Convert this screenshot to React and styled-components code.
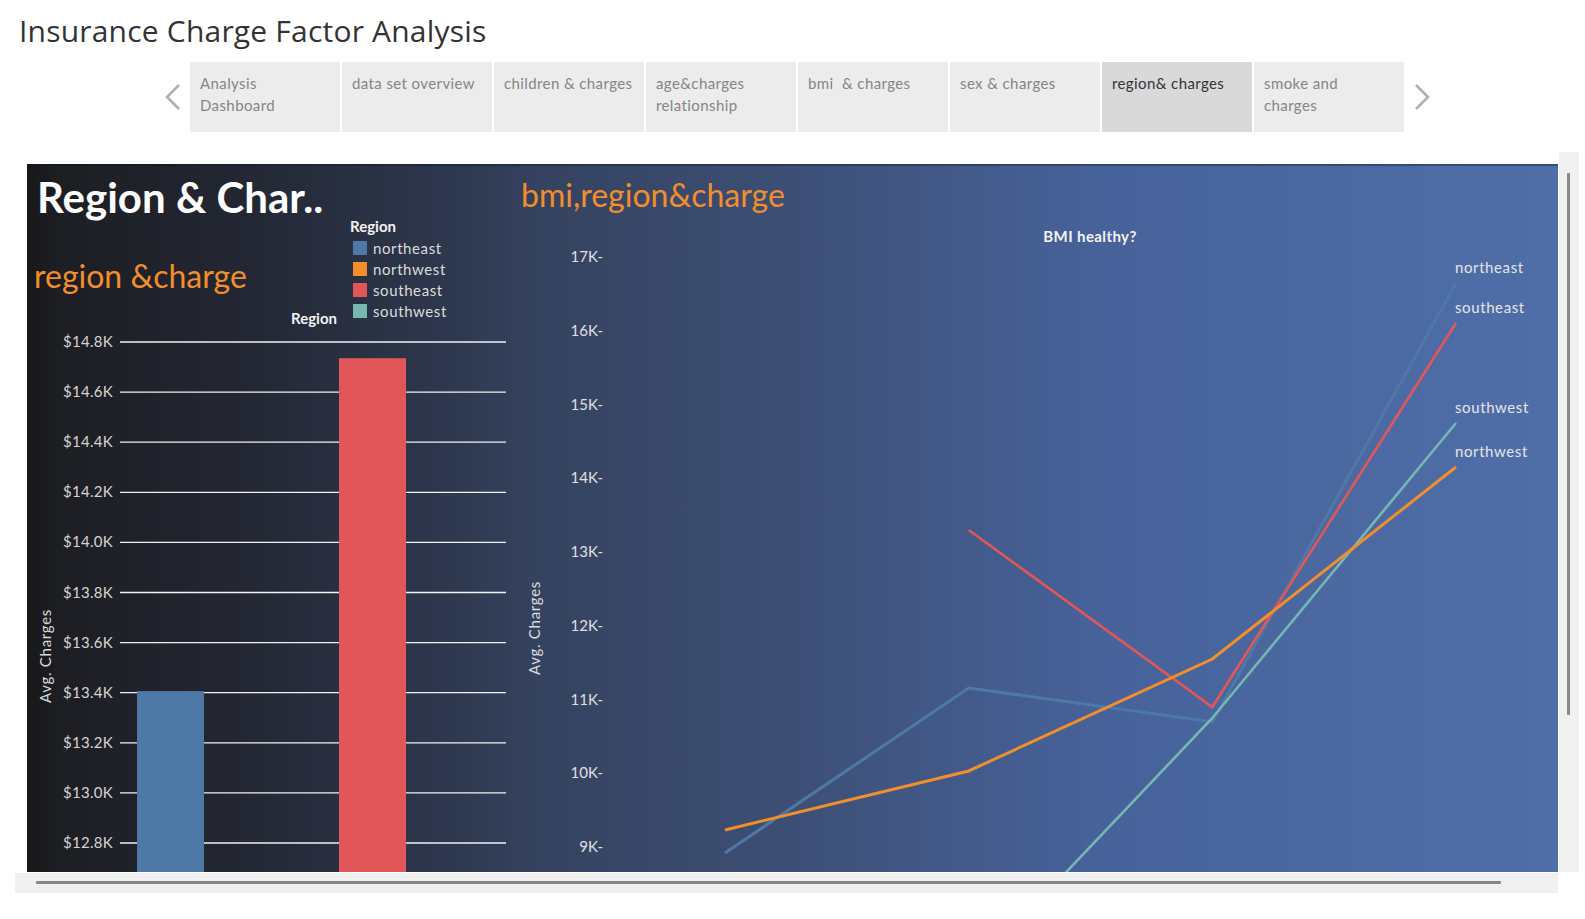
import React from "react";
import styled, { createGlobalStyle } from "styled-components";

const GlobalStyle = createGlobalStyle`
  body {
    margin: 0;
    background: #ffffff;
    font-family: Lato, "Open Sans", sans-serif;
  }
`;

const tabs = [
  "Analysis\nDashboard",
  "data set overview",
  "children & charges",
  "age&charges\nrelationship",
  "bmi  & charges",
  "sex & charges",
  "region& charges",
  "smoke and\ncharges",
];

const regions = [
  { name: "northeast", color: "#4e79a7", avg: 13406.38, bmi: [8919, 11156, 10695, 16648] },
  { name: "northwest", color: "#f28e2b", avg: 12417.58, bmi: [9231, 10031, 11549, 14153] },
  { name: "southeast", color: "#e15759", avg: 14735.41, bmi: [null, 13298, 10898, 16105] },
  { name: "southwest", color: "#76b7b2", avg: 12346.94, bmi: [5500, 7264, 10749, 14749] },
];

// bar chart scale
const barY = (v) => 12 + ((14800 - v) / 200) * 50.1;
const barTicks = [14800, 14600, 14400, 14200, 14000, 13800, 13600, 13400, 13200, 13000, 12800];

// line chart scale
const lineY = (v) => 37 + (17000 - v) * (590 / 8000);
const lineX = (i) => 215 + i * 243.67;
const lineTicks = [17, 16, 15, 14, 13, 12, 11, 10, 9];
const drawOrder = ["northeast", "southeast", "southwest", "northwest"];

const Chevron = ({ dir }) => (
  <svg width="16" height="26" viewBox="0 0 16 26">
    <path
      d={dir === "left" ? "M14 1 L2 13 L14 25" : "M2 1 L14 13 L2 25"}
      fill="none"
      stroke="#b0b0b0"
      strokeWidth="2.6"
    />
  </svg>
);

const BarChart = () => (
  <BarSvg width="483" height="542">
    {barTicks.map((t) => (
      <g key={t}>
        <line x1="93" x2="479" y1={barY(t)} y2={barY(t)} stroke="#f2f2f2" strokeWidth="1.3" />
        <text x="86" y={barY(t) + 5} textAnchor="end" fill="#d4d4d4" fontSize="15" letterSpacing="0.3">
          ${(t / 1000).toFixed(1)}K
        </text>
      </g>
    ))}
    {regions.map((r, i) => (
      <rect
        key={r.name}
        x={110 + i * 101}
        y={barY(r.avg)}
        width="67"
        height={Math.max(0, 542 - barY(r.avg))}
        fill={r.color}
      />
    ))}
    <text
      transform="translate(24 326) rotate(-90)"
      textAnchor="middle"
      fill="#d9d9d9"
      fontSize="15"
      letterSpacing="0.7"
    >
      Avg. Charges
    </text>
  </BarSvg>
);

const LineChart = () => (
  <LineSvg width="1048" height="652">
    {lineTicks.map((k) => (
      <text key={k} x="93" y={lineY(k * 1000) + 5} textAnchor="end" fill="#e0e0e0" fontSize="15">
        {k}K-
      </text>
    ))}
    <text
      transform="translate(30 408) rotate(-90)"
      textAnchor="middle"
      fill="#dcdcdc"
      fontSize="15"
      letterSpacing="0.7"
    >
      Avg. Charges
    </text>
    <text
      x="580"
      y="22"
      textAnchor="middle"
      fill="#f4f4f4"
      fontSize="15"
      fontWeight="700"
      letterSpacing="0.4"
    >
      BMI healthy?
    </text>
    {drawOrder.map((name) => {
      const r = regions.find((x) => x.name === name);
      const pts = r.bmi
        .map((v, i) => (v == null ? null : `${lineX(i)},${lineY(v)}`))
        .filter(Boolean)
        .join(" ");
      const last = r.bmi[r.bmi.length - 1];
      return (
        <g key={name}>
          <polyline
            points={pts}
            fill="none"
            stroke={r.color}
            strokeWidth={name === "northwest" || name === "northeast" ? 3 : 2.6}
            strokeLinejoin="miter"
          />
          <text x="945" y={lineY(last) - 10} fill="#e6e6e6" fontSize="15" letterSpacing="0.6">
            {name}
          </text>
        </g>
      );
    })}
  </LineSvg>
);

export default function App() {
  return (
    <Page>
      <GlobalStyle />
      <Title>Insurance Charge Factor Analysis</Title>
      <TabBar>
        <NavArrow>
          <Chevron dir="left" />
        </NavArrow>
        <Tabs>
          {tabs.map((t) => (
            <Tab key={t} $active={t === "region& charges"}>
              {t}
            </Tab>
          ))}
        </Tabs>
        <NavArrow>
          <Chevron dir="right" />
        </NavArrow>
      </TabBar>

      <Frame>
        <Content>
          <Panel>
            <LeftPane>
              <HeaderArea>
                <HeadLeft>
                  <BigTitle>Region &amp; Char..</BigTitle>
                  <SubTitle>region &amp;charge</SubTitle>
                  <AxisCaption>Region</AxisCaption>
                </HeadLeft>
                <Legend>
                  <LegendTitle>Region</LegendTitle>
                  <LegendList>
                    {regions.map((r) => (
                      <LegendItem key={r.name}>
                        <Swatch $color={r.color} />
                        {r.name}
                      </LegendItem>
                    ))}
                  </LegendList>
                </Legend>
              </HeaderArea>
              <BarChart />
            </LeftPane>
            <RightPane>
              <RightTitle>bmi,region&amp;charge</RightTitle>
              <LineChart />
            </RightPane>
          </Panel>
        </Content>
        <VTrack>
          <VThumb />
        </VTrack>
        <HTrack>
          <HThumb />
        </HTrack>
      </Frame>
    </Page>
  );
}

const Page = styled.div`
  width: 1585px;
  height: 919px;
  overflow: hidden;
`;

const Title = styled.h1`
  margin: 16px 0 0 19px;
  font-family: "Open Sans", sans-serif;
  font-weight: 400;
  font-size: 30px;
  line-height: 30px;
  letter-spacing: 0.2px;
  color: #333333;
`;

const TabBar = styled.div`
  display: flex;
  height: 70px;
  margin: 16px 0 0 155px;
`;

const NavArrow = styled.div`
  width: 35px;
  display: flex;
  align-items: center;
  justify-content: center;
`;

const Tabs = styled.div`
  display: flex;
  gap: 2px;
`;

const Tab = styled.div`
  width: 150px;
  box-sizing: border-box;
  padding: 10px 10px 0;
  background: ${(p) => (p.$active ? "#d9d9d9" : "#ececec")};
  color: ${(p) => (p.$active ? "#333333" : "#858585")};
  font-size: 15px;
  line-height: 22px;
  letter-spacing: 0.4px;
  white-space: pre-wrap;
`;

const Frame = styled.div`
  display: grid;
  grid-template-columns: 1543px 1px 20px;
  grid-template-rows: 720px 1px 20px;
  margin: 20px 0 0 15px;
`;

const Content = styled.div`
  grid-area: 1 / 1;
  padding: 12px 0 0 12px;
`;

const VTrack = styled.div`
  grid-area: 1 / 3;
  background: #f0f0f0;
  padding: 21px 0 0 8px;
`;

const VThumb = styled.div`
  width: 3px;
  height: 542px;
  background: #888888;
  border-radius: 1px;
`;

const HTrack = styled.div`
  grid-area: 3 / 1;
  background: #f0f0f0;
  padding: 8px 0 0 21px;
`;

const HThumb = styled.div`
  width: 1465px;
  height: 3px;
  background: #888888;
  border-radius: 1px;
`;

const Panel = styled.div`
  width: 1531px;
  height: 708px;
  display: flex;
  overflow: hidden;
  background: linear-gradient(
    to right,
    #18181a 0%,
    #1d1e23 2%,
    #232733 14%,
    #2e384f 28%,
    #35425f 33%,
    #3d4f76 50%,
    #47629a 70%,
    #4f6ea8 100%
  );
  box-shadow: inset 0 2px 0 rgba(10, 20, 40, 0.35);
`;

const LeftPane = styled.div`
  width: 483px;
  display: flex;
  flex-direction: column;
`;

const HeaderArea = styled.div`
  display: grid;
  grid-template-columns: 323px 1fr;
  height: 166px;
`;

const HeadLeft = styled.div`
  display: flex;
  flex-direction: column;
`;

const BigTitle = styled.div`
  margin: 12px 0 0 10px;
  font-weight: 700;
  font-size: 42px;
  line-height: 42px;
  color: #ffffff;
  white-space: nowrap;
`;

const SubTitle = styled.div`
  margin: 42px 0 0 7px;
  font-size: 32px;
  line-height: 32px;
  color: #f28e2b;
  white-space: nowrap;
`;

const AxisCaption = styled.div`
  margin: 19px 13px 0 0;
  text-align: right;
  font-weight: 700;
  font-size: 15px;
  line-height: 15px;
  color: #f2f2f2;
`;

const Legend = styled.div`
  padding-top: 54px;
`;

const LegendTitle = styled.div`
  font-weight: 700;
  font-size: 15px;
  line-height: 17px;
  color: #f2f2f2;
`;

const LegendList = styled.div`
  margin-top: 2px;
`;

const LegendItem = styled.div`
  display: flex;
  align-items: center;
  gap: 6px;
  height: 21px;
  padding-left: 3px;
  font-size: 15px;
  letter-spacing: 0.6px;
  color: #dcdcdc;
`;

const Swatch = styled.span`
  width: 14px;
  height: 14px;
  background: ${(p) => p.$color};
`;

const BarSvg = styled.svg`
  display: block;
  font-family: Lato, sans-serif;
`;

const RightPane = styled.div`
  flex: 1;
  display: flex;
  flex-direction: column;
`;

const RightTitle = styled.div`
  margin: 15px 0 0 11px;
  font-size: 32px;
  line-height: 32px;
  color: #f28e2b;
  white-space: nowrap;
`;

const LineSvg = styled.svg`
  display: block;
  margin-top: 9px;
  font-family: Lato, sans-serif;
`;
